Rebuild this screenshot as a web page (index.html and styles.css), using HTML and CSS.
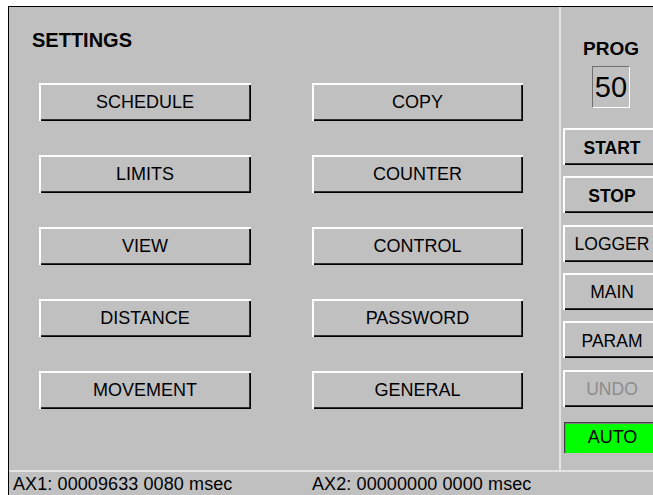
FILE: index.html
```html
<!DOCTYPE html>
<html lang="en">
<head>
<meta charset="utf-8">
<title>Settings</title>
<link rel="stylesheet" href="styles.css">
</head>
<body>
<div class="window">
  <div class="main">
    <section class="settings">
      <h1 class="title">SETTINGS</h1>
      <div class="grid">
        <button class="btn">SCHEDULE</button>
        <button class="btn">COPY</button>
        <button class="btn">LIMITS</button>
        <button class="btn">COUNTER</button>
        <button class="btn">VIEW</button>
        <button class="btn">CONTROL</button>
        <button class="btn">DISTANCE</button>
        <button class="btn">PASSWORD</button>
        <button class="btn">MOVEMENT</button>
        <button class="btn">GENERAL</button>
      </div>
    </section>
    <aside class="side">
      <div class="prog-label">PROG</div>
      <div class="prog-value">50</div>
      <div class="side-buttons">
        <button class="btn side-btn strong">START</button>
        <button class="btn side-btn strong">STOP</button>
        <button class="btn side-btn">LOGGER</button>
        <button class="btn side-btn">MAIN</button>
        <button class="btn side-btn">PARAM</button>
        <button class="btn side-btn disabled">UNDO</button>
      </div>
      <div class="auto">AUTO</div>
    </aside>
  </div>
  <footer class="status">
    <span class="axis">AX1: 00009633 0080 msec</span>
    <span class="axis">AX2: 00000000 0000 msec</span>
  </footer>
</div>
</body>
</html>
```

FILE: styles.css
```css
html, body {
  margin: 0;
  background: #ffffff;
}

body {
  width: 653px;
  height: 495px;
  padding: 6px 0 0 8px;
  box-sizing: border-box;
  overflow: hidden;
  font-family: "Liberation Sans", Arial, sans-serif;
  color: #000;
}

/* dialog frame, wider than the screen on the right */
.window {
  width: 654px;
  height: 489px;
  background: #c0c0c0;
  border-top: 1px solid #000;
  border-left: 1px solid #000;
  box-sizing: border-box;
  display: flex;
  flex-direction: column;
}

.main {
  display: flex;
  height: 463px;
}

/* left panel with the settings buttons */
.settings {
  width: 520px;
  flex: none;
  border-right: 2px solid #e4e4e4;
  padding-left: 30px;
}

.title {
  margin: 23px 0 0 -7px;
  font-size: 20px;
  line-height: 20px;
  font-weight: bold;
}

.grid {
  margin-top: 33px;
  display: grid;
  grid-template-columns: 212px 211px;
  grid-auto-rows: 38px;
  column-gap: 61px;
  row-gap: 34px;
}

/* raised 3D push button */
.btn {
  display: flex;
  align-items: center;
  justify-content: center;
  padding: 0;
  margin: 0;
  border: 0;
  background: #c0c0c0;
  box-shadow: inset 2px 2px 0 #ffffff, inset -1px -1px 0 #000000, inset -2px -2px 0 #303030;
  font-family: "Liberation Sans", Arial, sans-serif;
  font-size: 18px;
  color: #000;
}

/* right column */
.side {
  width: 100px;
  flex: none;
  padding-top: 31px;
  display: flex;
  flex-direction: column;
}

.prog-label {
  text-align: center;
  font-size: 19px;
  line-height: 22px;
  font-weight: bold;
}

.prog-value {
  align-self: center;
  margin-top: 6px;
  width: 38px;
  height: 42px;
  box-sizing: border-box;
  border: 1px solid;
  border-color: #707070 #ffffff #ffffff #707070;
  display: flex;
  align-items: center;
  justify-content: center;
  font-size: 29px;
  line-height: 1;
}

.side-buttons {
  margin-top: 20px;
  margin-left: 2px;
  display: flex;
  flex-direction: column;
  gap: 11.33px;
}

.side-btn {
  width: 98px;
  height: 37px;
  padding-top: 3px;
  font-size: 17.5px;
}

.side-btn.strong {
  font-weight: bold;
}

.side-btn.disabled {
  color: #8c8c8c;
}

.auto {
  margin: 15px 0 0 3px;
  height: 31px;
  padding-top: 1px;
  box-sizing: border-box;
  background: #00ff00;
  box-shadow: inset 1px 1px 0 #404040, inset 2px 2px 0 #808080;
  display: flex;
  align-items: center;
  justify-content: center;
  font-size: 18px;
}

/* status line */
.status {
  flex: 1;
  border-top: 2px solid #e4e4e4;
  display: flex;
  padding: 2px 0 0 4px;
  font-size: 18px;
  line-height: 21px;
  letter-spacing: 0.1px;
  overflow: hidden;
}

.axis {
  width: 299px;
  white-space: nowrap;
}
```
